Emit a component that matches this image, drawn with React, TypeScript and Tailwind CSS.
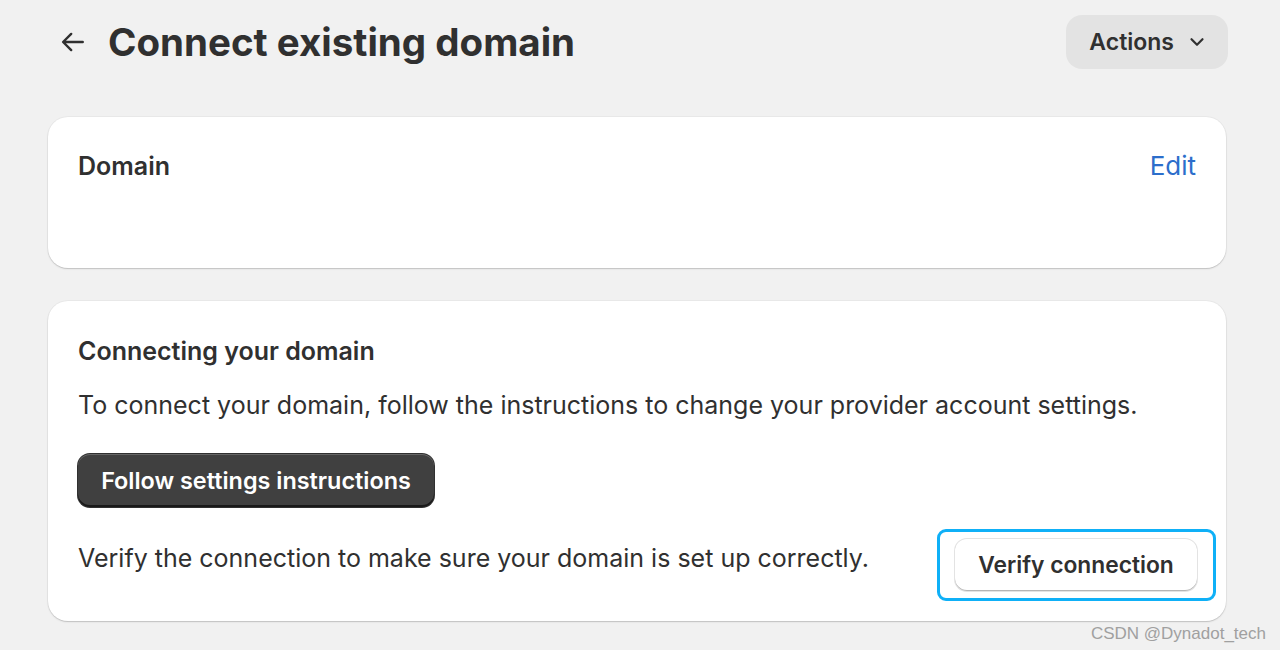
import React from "react";

export default function App() {
  return (
    <div
      className="w-[1280px] h-[650px] bg-[#f1f1f1] overflow-hidden relative text-[#303030]"
      style={{ fontFamily: "Inter, 'Noto Sans', sans-serif" }}
    >
      <div className="pl-[48px] pr-[54px] pt-[15px]">
        <div className="flex items-center justify-between mr-[-2px]">
          <div className="flex items-center h-[54px]">
            <svg width="30" height="30" viewBox="0 0 20 20" className="ml-[10px] mr-[20px] text-[#303030]">
              <path d="M16.5 10H3.8M8.8 4.6 3.4 10l5.4 5.4" fill="none" stroke="currentColor" strokeWidth="1.6" strokeLinecap="round" strokeLinejoin="round" />
            </svg>
            <h1 className="text-[38.5px] font-bold leading-none">Connect existing domain</h1>
          </div>
          <button className="h-[54px] pl-[23px] pr-[20px] rounded-[16px] bg-[#e3e3e3] flex items-center gap-[12px] text-[23px] font-semibold text-[#303030]">
            Actions
            <svg width="22" height="22" viewBox="0 0 20 20">
              <path d="M5 7.5l5 5 5-5" fill="none" stroke="currentColor" strokeWidth="2" strokeLinecap="round" strokeLinejoin="round" />
            </svg>
          </button>
        </div>

        <div className="mt-[48px] flex flex-col gap-[33px]">
          <div className="bg-white rounded-[20px] h-[151px] shadow-[0_1px_0_0_rgba(26,26,26,0.07),0_1px_2px_rgba(0,0,0,0.12),0_0_0_1px_rgba(0,0,0,0.03)] px-[30px] pt-[34px] flex justify-between items-start">
            <div className="text-[25px] font-semibold leading-[30px]">Domain</div>
            <div className="text-[26px] text-[#2c6ecb] leading-[30px]">Edit</div>
          </div>

          <div className="bg-white rounded-[20px] h-[320px] shadow-[0_1px_0_0_rgba(26,26,26,0.07),0_1px_2px_rgba(0,0,0,0.12),0_0_0_1px_rgba(0,0,0,0.03)] px-[30px] pt-[35px]">
            <div className="text-[25px] font-semibold leading-[30px]">Connecting your domain</div>
            <p className="mt-[24px] text-[25px] leading-[30px] text-[#303030]">
              To connect your domain, follow the instructions to change your provider account settings.
            </p>
            <button className="mt-[34px] h-[53px] w-[356px] rounded-[12px] bg-[#404040] text-white text-[23.4px] font-semibold shadow-[inset_0_-2px_0_rgba(0,0,0,0.6),inset_0_1px_0_rgba(255,255,255,0.2),0_0_0_1px_#303030]">
              Follow settings instructions
            </button>
            <div className="mt-[22px] flex items-start justify-between">
              <p className="mt-[14px] text-[25px] leading-[30px]">
                Verify the connection to make sure your domain is set up correctly.
              </p>
              <div className="mr-[-20px] border-[3.5px] border-[#0fb0f7] rounded-[9px] pl-[15px] pr-[16px] py-[7px]">
                <button className="h-[52px] w-[242px] rounded-[12px] bg-white text-[22.8px] font-semibold text-[#303030] shadow-[inset_0_-1px_0_#b5b5b5,0_0_0_1px_#e3e3e3]">
                  Verify connection
                </button>
              </div>
            </div>
          </div>
        </div>
      </div>
      <div
        className="absolute right-[14px] bottom-[8px] text-[17px] text-[#a0a0a0] leading-none"
        style={{ fontFamily: "'Liberation Sans', Arial, sans-serif" }}
      >
        CSDN @Dynadot_tech
      </div>
    </div>
  );
}
